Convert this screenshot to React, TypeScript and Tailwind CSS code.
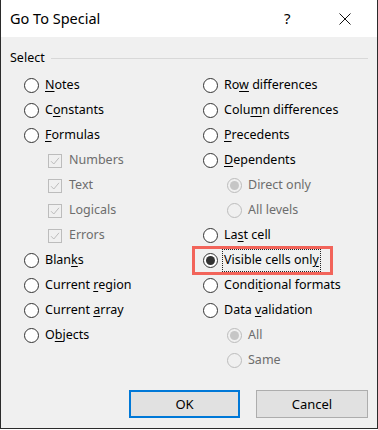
import React from "react";

const U = ({ children }: { children: React.ReactNode }) => (
  <span className="underline underline-offset-[2px] decoration-[1px]">{children}</span>
);

function Radio({ checked = false, disabled = false }: { checked?: boolean; disabled?: boolean }) {
  return (
    <div
      className={
        "w-[15px] h-[15px] rounded-full border flex items-center justify-center shrink-0 " +
        (disabled ? "border-[#bcbcbc] bg-[#f0f0f0]" : "border-[#333333] bg-white")
      }
    >
      {checked && (
        <div className={"w-[9px] h-[9px] rounded-full " + (disabled ? "bg-[#c6c6c6]" : "bg-[#333333]")} />
      )}
    </div>
  );
}

function Check() {
  return (
    <div className="w-[14px] h-[14px] border border-[#bcbcbc] bg-[#f0f0f0] flex items-center justify-center shrink-0">
      <svg width="10" height="10" viewBox="0 0 10 10" fill="none">
        <path d="M1 5.2 L3.8 8 L9 1.8" stroke="#bcbcbc" strokeWidth="1" />
      </svg>
    </div>
  );
}

function RRow({ children, checked, indent }: { children: React.ReactNode; checked?: boolean; indent?: boolean }) {
  return (
    <div className={"h-[25px] flex items-center gap-[6px] " + (indent ? "pl-[24px]" : "")}>
      <Radio checked={checked} disabled={indent} />
      <span className={indent ? "text-[#6d6d6d]" : "text-black"}>{children}</span>
    </div>
  );
}

function CRow({ children }: { children: React.ReactNode }) {
  return (
    <div className="h-[25px] flex items-center gap-[7px] pl-[24px]">
      <Check />
      <span className="text-[#6d6d6d]">{children}</span>
    </div>
  );
}

export default function App() {
  return (
    <div
      className="w-[378px] h-[429px] bg-[#f0f0f0] border-l border-r border-b border-[#2b2b2b] flex flex-col text-[12.5px] leading-none"
      style={{ fontFamily: '"Noto Sans", "Open Sans", sans-serif' }}
    >
      <div className="h-[37px] bg-white flex items-center pl-[9px] shrink-0">
        <span className="text-[14.5px] text-black flex-1">Go To Special</span>
        <span className="text-[15px] text-black w-[10px] mr-[45px]">?</span>
        <svg width="12" height="12" viewBox="0 0 12 12" className="mr-[26px]">
          <path d="M0.5 0.5 L11.5 11.5 M11.5 0.5 L0.5 11.5" stroke="#111" strokeWidth="1" />
        </svg>
      </div>
      <div className="flex items-center pl-[9px] pr-[9px] mt-[13px] h-[16px]">
        <span className="text-black">Select</span>
        <div className="flex-1 h-px bg-[#d8d8d8] ml-[6px]" />
      </div>
      <div className="grid grid-cols-[179px_1fr] pl-[23px] mt-[7px]">
        <div className="flex flex-col">
          <RRow><U>N</U>otes</RRow>
          <RRow>C<U>o</U>nstants</RRow>
          <RRow><U>F</U>ormulas</RRow>
          <CRow>Numbers</CRow>
          <CRow>Text</CRow>
          <CRow>Logicals</CRow>
          <CRow>Errors</CRow>
          <RRow>Blan<U>k</U>s</RRow>
          <RRow>Current <U>r</U>egion</RRow>
          <RRow>Current <U>a</U>rray</RRow>
          <RRow>O<U>b</U>jects</RRow>
        </div>
        <div className="flex flex-col">
          <RRow>Ro<U>w</U> differences</RRow>
          <RRow>Colu<U>m</U>n differences</RRow>
          <RRow><U>P</U>recedents</RRow>
          <RRow><U>D</U>ependents</RRow>
          <RRow indent checked>Direct only</RRow>
          <RRow indent>All levels</RRow>
          <RRow>La<U>s</U>t cell</RRow>
          <div className="h-[25px] flex items-center -ml-[11px]">
            <div className="h-[29px] w-[141px] border-[3px] border-[#f2645a] flex items-center pl-[8px] gap-[4px]">
              <Radio checked />
              <span className="text-black border border-dotted border-[#222] px-[1px] py-[4px]">Visible cells onl<U>y</U></span>
            </div>
          </div>
          <RRow>Condi<U>t</U>ional formats</RRow>
          <RRow>Data <U>v</U>alidation</RRow>
          <RRow indent checked>All</RRow>
          <RRow indent>Same</RRow>
        </div>
      </div>
      <div className="flex-1" />
      <div className="flex justify-end gap-[16px] pr-[9px] mb-[10px]">
        <button className="w-[111px] h-[28px] bg-[#e1e1e1] border-2 border-[#0078d7] text-black text-[13px]">OK</button>
        <button className="w-[112px] h-[28px] bg-[#e1e1e1] border border-[#adadad] text-black text-[13px]">Cancel</button>
      </div>
    </div>
  );
}
